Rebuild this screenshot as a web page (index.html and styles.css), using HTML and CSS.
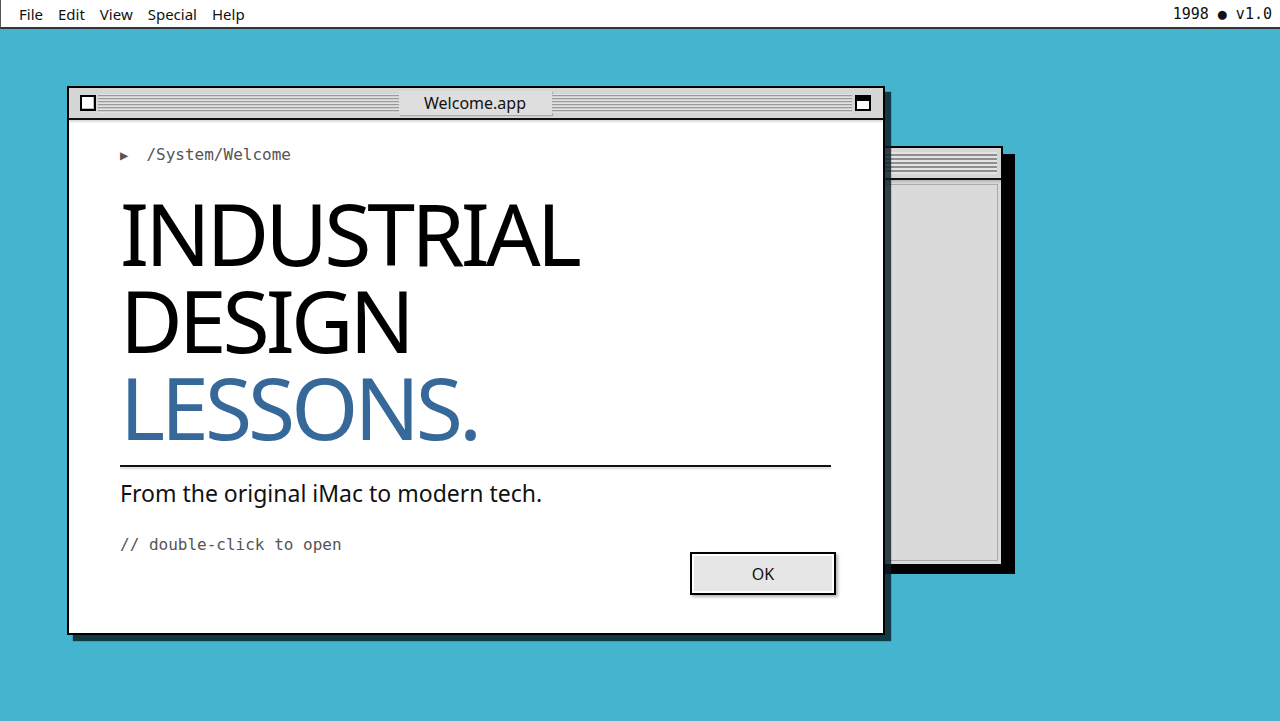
FILE: index.html
```html
<!DOCTYPE html>
<html lang="en">
<head>
  <meta charset="UTF-8">
  <title>Welcome.app</title>
  <link rel="stylesheet" href="styles.css">
</head>
<body>
  <div class="menubar">
    <div class="menu-left">
      <span>File</span>
      <span>Edit</span>
      <span>View</span>
      <span>Special</span>
      <span>Help</span>
    </div>
    <div class="menu-right">1998 ● v1.0</div>
  </div>

  <div class="desktop">
    <!-- window behind -->
    <div class="window back-window">
      <div class="titlebar back-titlebar">
        <div class="stripes"></div>
      </div>
      <div class="back-body"></div>
    </div>

    <!-- main window -->
    <div class="window main-window">
      <div class="titlebar">
        <div class="close-box"></div>
        <div class="stripes"></div>
        <div class="win-title">Welcome.app</div>
        <div class="stripes"></div>
        <div class="zoom-box"></div>
      </div>
      <div class="content">
        <p class="path"><span class="arrow">▶</span>/System/Welcome</p>
        <h1 class="headline">
          <span class="line">INDUSTRIAL</span>
          <span class="line">DESIGN</span>
          <span class="line blue">LESSONS.</span>
        </h1>
        <hr class="rule">
        <p class="subtitle">From the original iMac to modern tech.</p>
        <p class="hint">// double-click to open</p>
        <div class="actions">
          <button class="btn">OK</button>
        </div>
      </div>
    </div>
  </div>
</body>
</html>
```
FILE: styles.css
```css
html, body {
  margin: 0;
  height: 100%;
}
body {
  background: #45b4cf;
  font-family: "Noto Sans", Arial, sans-serif;
  overflow: hidden;
}
.menubar {
  height: 27px;
  background: #fff;
  border-bottom: 2px solid #333;
  border-left: 1px solid #555;
  display: flex;
  justify-content: space-between;
  align-items: center;
  font-size: 15px;
  color: #111;
  padding: 0 8px 0 18px;
}
.menu-left {
  display: flex;
  gap: 15px;
}
.menu-right {
  font-family: "DejaVu Sans Mono", monospace;
  font-size: 15px;
}
.desktop {
  position: relative;
  height: 692px;
}
.window {
  position: absolute;
  border: 2px solid #000;
  box-sizing: border-box;
}
.main-window {
  left: 67px;
  top: 57px;
  width: 818px;
  height: 549px;
  background: #fff;
  box-shadow: 6px 6px 1px rgba(8, 30, 36, 0.82);
}
.back-window {
  left: 700px;
  top: 117px;
  width: 303px;
  height: 420px;
  background: #d9d9d9;
  box-shadow: 12px 8px 0 #000;
}
.titlebar {
  height: 30px;
  background: #d6d6d6;
  border-bottom: 2px solid #111;
  display: flex;
  align-items: center;
  padding: 0 12px 0 11px;
  box-shadow: 0 2px 2px rgba(0, 0, 0, 0.15);
  position: relative;
}
.stripes {
  flex: 1;
  height: 19px;
  background: repeating-linear-gradient(#e2e2e2 0 1px, #9a9a9a 1px 2px, #cfcfcf 2px 3px);
}
.close-box {
  width: 12px;
  height: 12px;
  border: 2px solid #000;
  background: #fff;
  margin-right: 2px;
  box-shadow: inset -1px -1px 0 #bbb;
}
.zoom-box {
  width: 12px;
  height: 12px;
  border: 2px solid #000;
  background: linear-gradient(#000 0 4px, #fff 4px);
  margin-left: 3px;
}
.win-title {
  width: 153px;
  height: 24px;
  background: #dedede;
  font-size: 16px;
  line-height: 24px;
  text-align: center;
  color: #111;
  box-shadow: 1px 1px 1px rgba(0, 0, 0, 0.2);
}
.back-titlebar {
  padding: 0 4px 0 0;
}
.back-titlebar .stripes {
  height: 22px;
  background: repeating-linear-gradient(#e4e4e4 0 2px, #8e8e8e 2px 4px);
}
.back-body {
  position: absolute;
  left: 0;
  right: 3px;
  top: 36px;
  bottom: 3px;
  background: #dadada;
  border: 1px solid #aaa;
}
.content {
  padding: 25px 52px 0 51px;
}
.path {
  margin: 0;
  height: 20px;
  font-family: "DejaVu Sans Mono", monospace;
  font-size: 16px;
  line-height: 20px;
  color: #555;
}
.arrow {
  font-size: 14px;
  line-height: 0;
  margin-right: 18px;
}
.headline {
  margin: 24px 0 0;
  font-size: 86px;
  font-weight: 400;
  letter-spacing: -4px;
  color: #000;
}
.line {
  display: block;
  height: 87px;
  line-height: 87px;
}
.blue {
  color: #36689a;
}
.rule {
  margin: 15px 0 0;
  border: none;
  border-top: 2px solid #111;
  box-shadow: 0 2px 2px rgba(0, 0, 0, 0.15);
}
.subtitle {
  margin: 11px 0 0;
  font-size: 23px;
  line-height: 30px;
  color: #111;
}
.hint {
  margin: 26px 0 0;
  font-family: "DejaVu Sans Mono", monospace;
  font-size: 16px;
  line-height: 22px;
  color: #555;
}
.actions {
  display: flex;
  justify-content: flex-end;
  margin-right: -5px;
  margin-top: -4px;
}
.btn {
  width: 146px;
  height: 43px;
  background: #e6e6e6;
  border: 2px solid #000;
  font-family: "Noto Sans", Arial, sans-serif;
  font-size: 16px;
  color: #111;
  box-shadow: inset 0 0 0 2px #fff, 2px 2px 3px rgba(0, 0, 0, 0.3);
  cursor: pointer;
}
```
